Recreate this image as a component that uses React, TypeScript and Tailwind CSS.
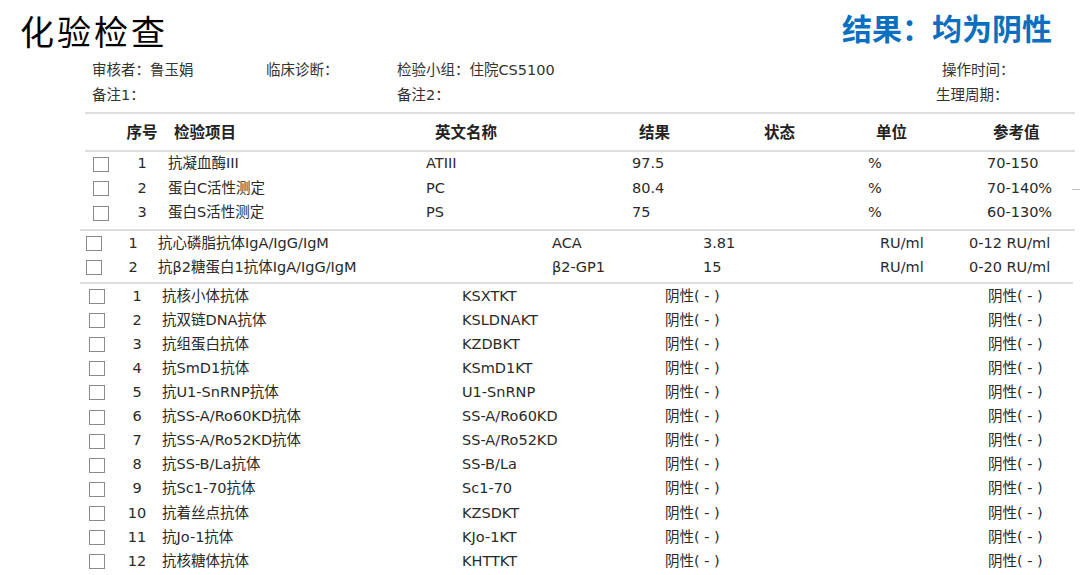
import React from "react";

const FONT = { fontFamily: '"DejaVu Sans", "Noto Sans CJK SC", sans-serif' };

type Row = [string, string, string, string, string, string];

const coag: Row[] = [
  ["1", "抗凝血酶III", "ATIII", "97.5", "%", "70-150"],
  ["2", "蛋白C活性测定", "PC", "80.4", "%", "70-140%"],
  ["3", "蛋白S活性测定", "PS", "75", "%", "60-130%"],
];

const aps: Row[] = [
  ["1", "抗心磷脂抗体IgA/IgG/IgM", "ACA", "3.81", "RU/ml", "0-12 RU/ml"],
  ["2", "抗β2糖蛋白1抗体IgA/IgG/IgM", "β2-GP1", "15", "RU/ml", "0-20 RU/ml"],
];

const ana: [string, string, string][] = [
  ["1", "抗核小体抗体", "KSXTKT"],
  ["2", "抗双链DNA抗体", "KSLDNAKT"],
  ["3", "抗组蛋白抗体", "KZDBKT"],
  ["4", "抗SmD1抗体", "KSmD1KT"],
  ["5", "抗U1-SnRNP抗体", "U1-SnRNP"],
  ["6", "抗SS-A/Ro60KD抗体", "SS-A/Ro60KD"],
  ["7", "抗SS-A/Ro52KD抗体", "SS-A/Ro52KD"],
  ["8", "抗SS-B/La抗体", "SS-B/La"],
  ["9", "抗Sc1-70抗体", "Sc1-70"],
  ["10", "抗着丝点抗体", "KZSDKT"],
  ["11", "抗Jo-1抗体", "KJo-1KT"],
  ["12", "抗核糖体抗体", "KHTTKT"],
];

function Box() {
  return <div className="h-[15px] w-[16px] border border-[#8a8a8a] bg-white" />;
}

function Line() {
  return <div className="h-[2px] bg-[#dedede]" />;
}

export default function App() {
  return (
    <div
      className="w-[1080px] h-[575px] overflow-hidden bg-white text-[#2a2a2a] text-[14.5px]"
      style={FONT}
    >
      {/* Title bar */}
      <div className="flex items-start justify-between pl-[20px] pr-[28px]">
        <h1
          className="text-[34px] tracking-[3px] leading-[40px] mt-[11px] text-black"
          style={{ fontFamily: '"Noto Sans CJK SC", sans-serif' }}
        >
          化验检查
        </h1>
        <div
          className="text-[30px] font-bold leading-[36px] mt-[9px] text-[#0a6fc0]"
          style={{ fontFamily: '"Noto Sans CJK SC", sans-serif' }}
        >
          结果：均为阴性
        </div>
      </div>

      {/* Info */}
      <div className="mt-[7px] text-[14.5px] text-[#333]">
        <div className="flex h-[25px] items-center">
          <span className="w-[174px] pl-[92px] box-content">审核者：鲁玉娟</span>
          <span className="w-[131px]">临床诊断：</span>
          <span className="w-[545px]">检验小组：住院CS5100</span>
          <span>操作时间：</span>
        </div>
        <div className="flex h-[25px] items-center">
          <span className="w-[305px] pl-[92px] box-content">备注1：</span>
          <span className="w-[539px]">备注2：</span>
          <span>生理周期：</span>
        </div>
      </div>

      {/* Section 1 */}
      <div className="ml-[85px] w-[990px] mt-[4px]">
        <Line />
        <div className="flex h-[36px] pt-[3px] items-center font-bold text-[15.5px] text-[#222]">
          <div className="w-[45px]" />
          <div className="w-[24px] flex justify-center whitespace-nowrap">序号</div>
          <div className="w-[272px] pl-[20px]">检验项目</div>
          <div className="w-[206px] pl-[9px]">英文名称</div>
          <div className="w-[236px] pl-[7px] flex">
            <span className="w-[125px]">结果</span>
            <span>状态</span>
          </div>
          <div className="w-[119px] pl-[8px]">单位</div>
          <div className="pl-[6px]">参考值</div>
        </div>
        <Line />
        <div className="relative pb-[3px]">
          {coag.map((r) => (
            <div key={r[0]} className="flex h-[24.5px] items-center whitespace-nowrap">
              <div className="w-[45px] pl-[8px]">
                <Box />
              </div>
              <div className="w-[24px] flex justify-center">{r[0]}</div>
              <div className="w-[272px] pl-[14px]">{r[1]}</div>
              <div className="w-[206px]">{r[2]}</div>
              <div className="w-[236px]">{r[3]}</div>
              <div className="w-[119px]">{r[4]}</div>
              <div>{r[5]}</div>
            </div>
          ))}
          <div className="absolute right-[-5px] top-[37px] h-px w-[8px] bg-[#bdbdbd]" />
        </div>
      </div>

      {/* Section 2 */}
      <div className="ml-[80px] w-[995px]">
        <Line />
        <div className="pt-px pb-[2px]">
          {aps.map((r) => (
            <div key={r[0]} className="flex h-6 items-center whitespace-nowrap">
              <div className="w-[38px] pl-[6px]">
                <Box />
              </div>
              <div className="w-[30px] flex justify-center">{r[0]}</div>
              <div className="w-[404px] pl-[10px]">{r[1]}</div>
              <div className="w-[151px]">{r[2]}</div>
              <div className="w-[177px]">{r[3]}</div>
              <div className="w-[89px]">{r[4]}</div>
              <div>{r[5]}</div>
            </div>
          ))}
        </div>
      </div>

      {/* Section 3 */}
      <div className="ml-[80px] w-[993px]">
        <Line />
        <div className="pt-px">
          {ana.map((r) => (
            <div key={r[0]} className="flex h-[24.1px] items-center whitespace-nowrap">
              <div className="w-[42px] pl-[9px]">
                <Box />
              </div>
              <div className="w-[30px] flex justify-center">{r[0]}</div>
              <div className="w-[310px] pl-[10px]">{r[1]}</div>
              <div className="w-[203px]">{r[2]}</div>
              <div className="w-[323px]">阴性( - )</div>
              <div>阴性( - )</div>
            </div>
          ))}
        </div>
      </div>
    </div>
  );
}
